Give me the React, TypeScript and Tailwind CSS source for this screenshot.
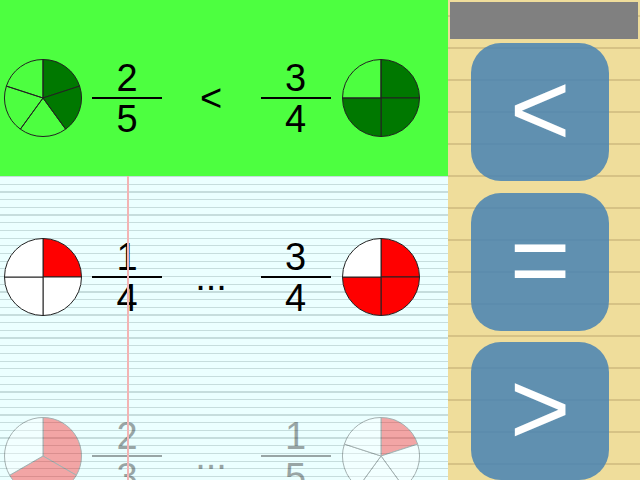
import React from "react";

type PieProps = { n: number; k: number; fill: string; empty: string };

function Pie({ n, k, fill, empty }: PieProps) {
  const cx = 40;
  const cy = 40;
  const r = 38.5;
  const segs = [];
  for (let i = 0; i < n; i++) {
    const a1 = -Math.PI / 2 + (i * 2 * Math.PI) / n;
    const a2 = -Math.PI / 2 + ((i + 1) * 2 * Math.PI) / n;
    const x1 = cx + r * Math.cos(a1);
    const y1 = cy + r * Math.sin(a1);
    const x2 = cx + r * Math.cos(a2);
    const y2 = cy + r * Math.sin(a2);
    const large = a2 - a1 > Math.PI ? 1 : 0;
    const d = `M ${cx} ${cy} L ${x1.toFixed(2)} ${y1.toFixed(2)} A ${r} ${r} 0 ${large} 1 ${x2.toFixed(2)} ${y2.toFixed(2)} Z`;
    segs.push(
      <path
        key={i}
        d={d}
        fill={i < k ? fill : empty}
        stroke="#222"
        strokeWidth={1}
        strokeLinejoin="round"
      />
    );
  }
  return (
    <svg width="80" height="80" viewBox="0 0 80 80">
      {segs}
    </svg>
  );
}

function Fraction({ num, den }: { num: number; den: number }) {
  return (
    <div className="flex flex-col items-center">
      <div className="h-[38px] text-[38px] leading-[38px]">{num}</div>
      <div className="h-[2px] w-[70px] bg-current" />
      <div className="mt-[1px] h-[38px] text-[38px] leading-[38px]">{den}</div>
    </div>
  );
}

type RowProps = {
  a: [number, number];
  b: [number, number];
  op: string;
  fill: string;
  empty: string;
};

function Row({ a, b, op, fill, empty }: RowProps) {
  return (
    <div className="grid h-[80px] grid-cols-[84px_84px_84px_85px_85px] items-center pl-[1px]">
      <div className="flex justify-center">
        <Pie n={a[1]} k={a[0]} fill={fill} empty={empty} />
      </div>
      <div className="flex justify-center">
        <Fraction num={a[0]} den={a[1]} />
      </div>
      <div className="flex justify-center text-[38px] leading-[38px]">{op}</div>
      <div className="flex justify-center">
        <Fraction num={b[0]} den={b[1]} />
      </div>
      <div className="flex justify-center">
        <Pie n={b[1]} k={b[0]} fill={fill} empty={empty} />
      </div>
    </div>
  );
}

export default function App() {
  return (
    <div
      className="flex h-[480px] w-[640px] overflow-hidden text-black"
      style={{ fontFamily: '"Liberation Sans", Arial, sans-serif' }}
    >
      <div className="relative flex h-[480px] w-[448px] flex-col overflow-hidden">
        <div className="h-[176px] shrink-0 bg-[#4dff40] pt-[58px]">
          <Row a={[2, 5]} b={[3, 4]} op="<" fill="#007800" empty="none" />
        </div>
        <div className="flex-1 bg-[#ebffff] bg-[repeating-linear-gradient(to_bottom,#c6dddd_0px,#c6dddd_1.2px,transparent_1.2px,transparent_7.69px)] pt-[61px]">
          <Row a={[1, 4]} b={[3, 4]} op="..." fill="#ff0000" empty="#ffffff" />
          <div className="mt-[99px] text-[#000] opacity-[0.35]">
            <Row a={[2, 3]} b={[1, 5]} op="..." fill="#ff0000" empty="#ffffff" />
          </div>
        </div>
        <div className="pointer-events-none absolute bottom-0 left-[127px] top-[176px] w-[2px] bg-[#f3b4b4]" />
      </div>
      <div className="flex h-[480px] w-[192px] flex-col bg-[#efdd9b] bg-[repeating-linear-gradient(to_bottom,transparent_0px,transparent_15px,#d6c285_15px,#d6c285_17px,transparent_17px,transparent_32px)] px-[2px] pt-[2px]">
        <div className="h-[38px] bg-[#808080]" />
        <div className="mt-[4px] flex flex-col gap-[11.5px] pl-[21px]">
          <button className="flex h-[138px] w-[138px] items-center justify-center rounded-[30px] bg-[#4682b4]/85 pb-[6px] text-[104px] leading-[104px] text-white">
            &lt;
          </button>
          <button className="flex h-[138px] w-[138px] items-center justify-center rounded-[30px] bg-[#4682b4]/85 pb-[6px] text-[104px] leading-[104px] text-white">
            =
          </button>
          <button className="flex h-[138px] w-[138px] items-center justify-center rounded-[30px] bg-[#4682b4]/85 pb-[6px] text-[104px] leading-[104px] text-white">
            &gt;
          </button>
        </div>
      </div>
    </div>
  );
}
